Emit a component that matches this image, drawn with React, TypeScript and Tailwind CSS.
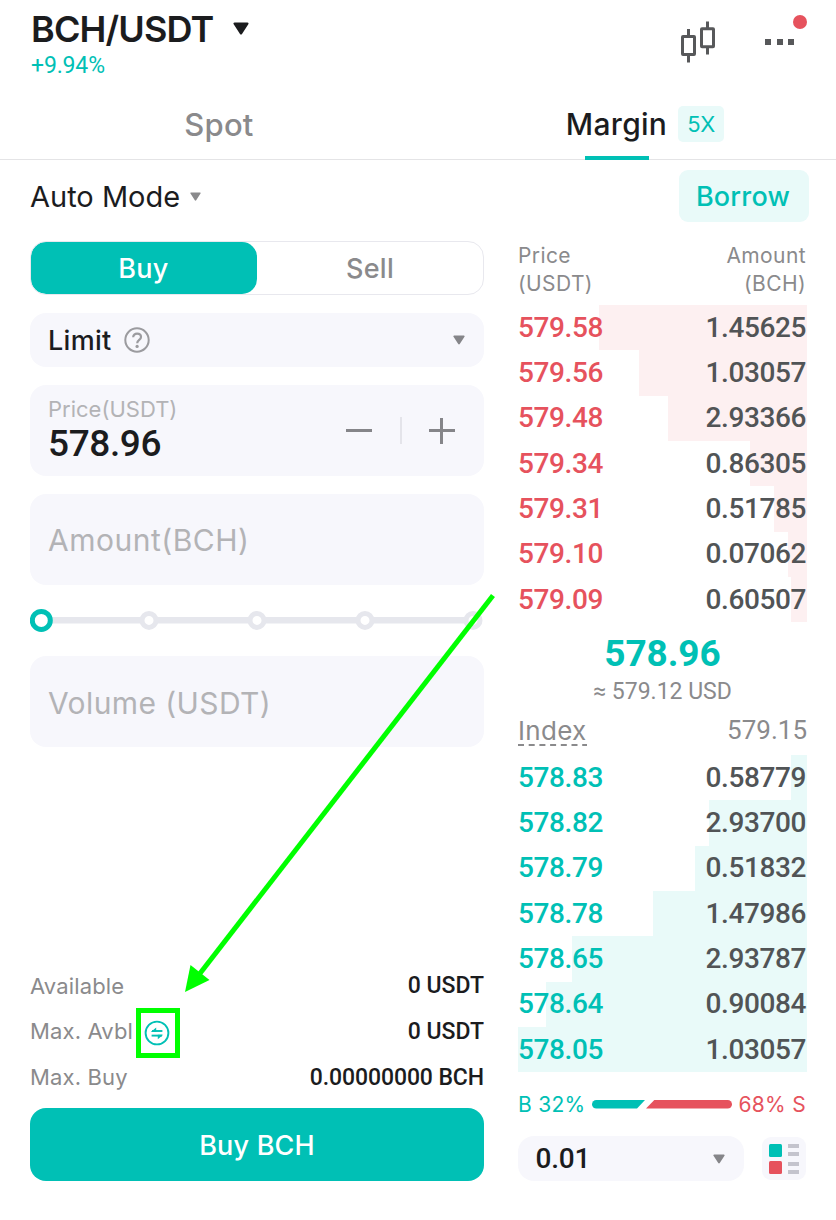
import React from 'react';

type Level = { price: string; amount: string; depth: number };

const asks: Level[] = [
  { price: '579.58', amount: '1.45625', depth: 208 },
  { price: '579.56', amount: '1.03057', depth: 168 },
  { price: '579.48', amount: '2.93366', depth: 139 },
  { price: '579.34', amount: '0.86305', depth: 57.3 },
  { price: '579.31', amount: '0.51785', depth: 33 },
  { price: '579.10', amount: '0.07062', depth: 19 },
  { price: '579.09', amount: '0.60507', depth: 16.5 },
];

const bids: Level[] = [
  { price: '578.83', amount: '0.58779', depth: 16.5 },
  { price: '578.82', amount: '2.93700', depth: 98 },
  { price: '578.79', amount: '0.51832', depth: 112 },
  { price: '578.78', amount: '1.47986', depth: 154 },
  { price: '578.65', amount: '2.93787', depth: 235 },
  { price: '578.64', amount: '0.90084', depth: 261 },
  { price: '578.05', amount: '1.03057', depth: 289 },
];

function Caret({ className }: { className: string }) {
  return (
    <svg viewBox="0 0 16 13" className={className} fill="currentColor">
      <path d="M1.6 0.5h12.8c1 0 1.5 1 .9 1.8L9 11.9c-.5.8-1.5.8-2 0L.7 2.3C.1 1.5.6.5 1.6.5z" />
    </svg>
  );
}

function BookSide({ levels, side }: { levels: Level[]; side: 'ask' | 'bid' }) {
  return (
    <div className="flex h-[317.4px] flex-col">
      {levels.map((l) => (
        <div
          key={l.price}
          className="relative flex flex-1 items-center justify-between font-[Roboto,sans-serif] text-[28px] leading-none font-medium tracking-[-0.4px]"
        >
          <div
            className={
              side === 'ask'
                ? 'absolute inset-y-0 right-0 bg-[#fdf0f1]'
                : 'absolute inset-y-0 right-0 bg-[#e9faf9]'
            }
            style={{ width: l.depth }}
          />
          <span className={side === 'ask' ? 'relative text-[#e6525d]' : 'relative text-[#00c0b5]'}>
            {l.price}
          </span>
          <span className="relative pr-px text-[#515456]">{l.amount}</span>
        </div>
      ))}
    </div>
  );
}

function Header() {
  return (
    <header className="flex h-[90px] justify-between pr-[42px] pl-[30px]">
      <div className="flex flex-col">
        <div className="mt-[9px] flex h-[40px] items-center text-[#1b1c1e]">
          <h1 className="ml-px text-[36px] leading-none font-[580] tracking-[-0.85px]">BCH/USDT</h1>
          <Caret className="ml-[20px] h-[13px] w-[16px] -translate-y-px" />
        </div>
        <div className="mt-[3px] ml-px flex h-[27px] items-center font-[Roboto,sans-serif] text-[23px] leading-none tracking-[-0.15px] text-[#00c0b5]">
          +9.94%
        </div>
      </div>
      <div className="flex h-[84px] items-center gap-[48px]">
        <svg viewBox="0 0 36 42" className="h-[42px] w-[36px]" fill="none" stroke="#57585a" strokeWidth="3">
          <rect x="1.5" y="15.5" width="12" height="18" rx="0.5" />
          <path d="M7.5 8v7M7.5 34v7.5" />
          <rect x="20.5" y="7.8" width="12" height="18" rx="0.5" />
          <path d="M26.5 0.5v7M26.5 26.500v7" />
        </svg>
        <div className="relative flex gap-[5.5px]">
          <i className="size-[6px] bg-[#57585a]" />
          <i className="size-[6px] bg-[#57585a]" />
          <i className="size-[6px] bg-[#57585a]" />
          <i className="absolute -top-[24px] left-[28px] size-[14px] rounded-full bg-[#e6525d]" />
        </div>
      </div>
    </header>
  );
}

function Tabs() {
  return (
    <nav className="flex h-[70px] border-b border-[#e4e4e6]">
      <div className="flex h-[68px] w-[438px] items-center justify-center text-[31px] leading-none font-[450] tracking-[0.2px] text-[#8a8a8c]">
        Spot
      </div>
      <div className="flex h-[70px] pl-[128px]">
        <div className="flex h-[70px] w-[101px] flex-col items-center">
          <span className="flex h-[66px] items-center pt-[2px] text-[30px] leading-none font-[450] tracking-[0.3px] text-[#1b1c1e]">
            Margin
          </span>
          <i className="h-[4px] w-[64px] shrink-0 bg-[#00c0b5]" />
        </div>
        <span className="mt-[16px] ml-[11px] flex h-[36px] w-[46px] items-center justify-center rounded-[5px] bg-[#e9faf9] text-[22px] leading-none tracking-[-0.4px] text-[#00c0b5]">
          5X
        </span>
      </div>
    </nav>
  );
}

function Slider() {
  return (
    <svg viewBox="0 0 454 24" className="mt-[22.5px] h-[24px] w-[454px]">
      <path d="M11 12.3H443" stroke="#e6e7ed" strokeWidth="6.6" />
      {[119, 227, 335, 443].map((x) => (
        <circle key={x} cx={x} cy="12.4" r="7" fill="#fff" stroke="#e6e7ed" strokeWidth="5" />
      ))}
      <circle cx="11.3" cy="12.4" r="9" fill="#fff" stroke="#00c0b5" strokeWidth="5" />
    </svg>
  );
}

function SwapIcon() {
  return (
    <svg viewBox="0 0 26 26" className="size-[26px]" fill="none" stroke="#00c0b5" strokeWidth="1.9">
      <circle cx="13" cy="13" r="11.4" />
      <path d="M18.4 11H8" />
      <path d="M7.6 15.6H18" />
      <path d="M6.8 11.900l5.400-4.500v4.500zM19.200 14.700l-5.400 4.500v-4.500z" fill="#00c0b5" stroke="none" />
    </svg>
  );
}

function OrderForm() {
  return (
    <section className="flex w-[454px] flex-col">
      <div className="flex h-[54px] overflow-hidden rounded-[16px] border border-[#e8e8ee] text-[27px] leading-none font-[450] tracking-[0.3px]">
        <button className="w-[226px] rounded-[15px] bg-[#00c0b5] pr-px text-white">Buy</button>
        <button className="flex-1 text-[#8a8a8c]">Sell</button>
      </div>

      <div className="mt-[18px] flex h-[54px] items-center rounded-[16px] bg-[#f7f7fc] pr-[19px] pl-[18px]">
        <span className="text-[27px] leading-none font-medium tracking-[0.3px] text-[#1b1c1e]">Limit</span>
        <svg viewBox="0 0 26 26" className="ml-[12px] size-[26px]" fill="none" stroke="#9b9b9f" strokeWidth="2">
          <circle cx="13" cy="13" r="11.7" />
          <path d="M9.2 10.300c0-2.200 1.700-3.600 3.900-3.600s3.900 1.400 3.900 3.400c0 2.900-3.800 2.900-3.800 6.200" strokeWidth="2.2" />
          <circle cx="13.1" cy="19.4" r="1.6" fill="#9b9b9f" stroke="none" />
        </svg>
        <Caret className="ml-auto h-[10px] w-[12px] text-[#858589]" />
      </div>

      <div className="mt-[18px] flex h-[91px] items-center rounded-[16px] bg-[#f7f7fc] pr-[29px] pl-[18px]">
        <div className="flex h-full flex-1 flex-col pt-[11px]">
          <span className="flex h-[25px] items-center text-[22px] leading-none text-[#b3b3b6]">Price(USDT)</span>
          <span className="flex h-[44px] items-center font-[Roboto,sans-serif] text-[37px] leading-none font-medium tracking-[-0.4px] text-[#1b1c1e]">
            578.96
          </span>
        </div>
        <i className="h-[3px] w-[26px] bg-[#858589]" />
        <i className="ml-[28px] h-[27px] w-[2px] bg-[#e4e4ea]" />
        <svg viewBox="0 0 26 26" className="ml-[27px] size-[26px]" stroke="#858589" strokeWidth="3">
          <path d="M0 12.500h26M12.500 0v26" />
        </svg>
      </div>

      <div className="mt-[18px] flex h-[91px] items-center rounded-[16px] bg-[#f7f7fc] pl-[18px] text-[30px] leading-none tracking-[0.5px] text-[#b3b3b6]">
        Amount(BCH)
      </div>

      <Slider />

      <div className="mt-[24.5px] flex h-[91px] items-center rounded-[16px] bg-[#f7f7fc] pt-[2px] pl-[18px] text-[30px] leading-none tracking-[0.4px] text-[#b3b3b6]">
        Volume (USDT)
      </div>

      <div className="mt-[216px] flex flex-col text-[22px] leading-none tracking-[0.15px] text-[#8a8a8c]">
        <div className="flex h-[45.5px] items-center justify-between">
          <span>Available</span>
          <span className="font-[Roboto,sans-serif] text-[23px] font-medium tracking-[0px] text-[#1b1c1e]">0 USDT</span>
        </div>
        <div className="flex h-[45.5px] items-center">
          <span className="w-[103px] whitespace-nowrap">Max. Avbl</span>
          <span className="relative mt-[4px] ml-[11px]">
            <SwapIcon />
            <i className="absolute -top-[12px] -left-[8px] h-[50px] w-[44px] border-[5px] border-[#00ff00]" />
          </span>
          <span className="ml-auto font-[Roboto,sans-serif] text-[23px] font-medium tracking-[0px] text-[#1b1c1e]">
            0 USDT
          </span>
        </div>
        <div className="flex h-[45.5px] items-center justify-between">
          <span>Max. Buy</span>
          <span className="pt-px font-[Roboto,sans-serif] text-[23px] font-medium tracking-[-0.1px] text-[#1b1c1e]">
            0.00000000 BCH
          </span>
        </div>
      </div>

      <button className="mt-[8px] h-[73px] rounded-[16px] bg-[#00c0b5] pt-[2px] text-[27px] leading-none font-[450] tracking-[0.2px] text-white">
        Buy BCH
      </button>
    </section>
  );
}

function OrderBook() {
  return (
    <section className="flex w-[289px] flex-col">
      <div className="flex h-[64px] justify-between pt-px text-[21px] leading-[27.5px] tracking-[0.4px] text-[#8a8a8c]">
        <div>
          Price
          <br />
          (USDT)
        </div>
        <div className="pr-px text-right">
          Amount
          <br />
          (BCH)
        </div>
      </div>
      <BookSide levels={asks} side="ask" />
      <div className="flex h-[132.6px] flex-col">
        <div className="mt-[9px] flex h-[44px] items-center justify-center font-[Roboto,sans-serif] text-[37px] leading-none font-bold tracking-[-0.1px] text-[#00c0b5]">
          578.96
        </div>
        <div className="mt-[3px] flex h-[26px] items-center justify-center font-[Roboto,sans-serif] text-[23px] leading-none text-[#8a8a8c]">
          ≈ 579.12 USD
        </div>
        <div className="mt-[11px] flex h-[34px] items-start justify-between leading-none text-[#8a8a8c]">
          <div className="flex flex-col">
            <span className="flex h-[29px] items-center pt-[2px] text-[26px] tracking-[0.3px]">Index</span>
            <svg viewBox="0 0 69 2" className="h-[2px] w-[69px]">
              <path d="M0 1H69" stroke="#8a8a8c" strokeWidth="2" strokeDasharray="6 4.7" />
            </svg>
          </div>
          <span className="flex h-[29px] items-center font-[Roboto,sans-serif] text-[26px]">579.15</span>
        </div>
      </div>
      <BookSide levels={bids} side="bid" />
      <div className="mt-[19px] flex h-[27px] items-center text-[21px] leading-none tracking-[0.3px]">
        <span className="w-[74px] text-[#00c0b5]">B 32%</span>
        <svg viewBox="0 0 140 9" className="h-[9px] w-[140px]">
          <path d="M4.3 0H53L45 8.6H4.3a4.3 4.3 0 0 1 0-8.6z" fill="#00c0b5" />
          <path d="M62.300 0H135.700a4.300 4.300 0 0 1 0 8.600H54z" fill="#e6525d" />
        </svg>
        <span className="ml-auto pr-px text-[#e6525d]">68% S</span>
      </div>
      <div className="mt-[18px] flex items-center justify-between">
        <div className="flex h-[45px] w-[226px] items-center justify-between rounded-[16px] bg-[#f7f7fc] pr-[19px] pl-[17.5px]">
          <span className="font-[Roboto,sans-serif] text-[28px] leading-none font-medium tracking-[-0.2px] text-[#1b1c1e]">
            0.01
          </span>
          <Caret className="h-[10px] w-[12px] text-[#858589]" />
        </div>
        <div className="mr-px flex h-[43px] w-[44px] items-center justify-center gap-[6px] rounded-[9px] bg-[#f7f7fc] pr-px">
          <div className="flex flex-col gap-[4px]">
            <i className="size-[13px] rounded-[1.5px] bg-[#00c0b5]" />
            <i className="size-[13px] rounded-[1.5px] bg-[#e6525d]" />
          </div>
          <div className="flex flex-col">
            <i className="h-[4px] w-[11px] bg-[#c4c4cd]" />
            <i className="mt-[4px] h-[4px] w-[11px] bg-[#c4c4cd]" />
            <i className="mt-[6px] h-[4px] w-[11px] bg-[#c4c4cd]" />
            <i className="mt-[4px] h-[4px] w-[11px] bg-[#c4c4cd]" />
          </div>
        </div>
      </div>
    </section>
  );
}

export default function App() {
  return (
    <div className="relative h-[1220px] w-[836px] overflow-hidden bg-white font-[Inter,sans-serif]">
      <Header />
      <Tabs />
      <div className="flex h-[81px] items-start justify-between pt-[10px] pr-[27px] pl-[30px]">
        <div className="flex h-[52px] items-center text-[29px] leading-none text-[#1b1c1e]">
          Auto Mode
          <Caret className="ml-[10px] h-[9px] w-[11px] text-[#8a8a8c]" />
        </div>
        <button className="h-[52px] w-[130px] rounded-[9px] bg-[#e9faf9] pr-[2px] text-[27px] leading-none font-[450] tracking-[0.2px] text-[#00c0b5]">
          Borrow
        </button>
      </div>
      <div className="flex justify-between pr-[29px] pl-[30px]">
        <OrderForm />
        <OrderBook />
      </div>
      <svg viewBox="0 0 836 1220" className="pointer-events-none absolute inset-0 h-[1220px] w-[836px]">
        <path d="M493 595.500L198 976" stroke="#00ff00" strokeWidth="5" />
        <path d="M185 992L190.500 965L209.500 980z" fill="#00ff00" />
      </svg>
    </div>
  );
}
